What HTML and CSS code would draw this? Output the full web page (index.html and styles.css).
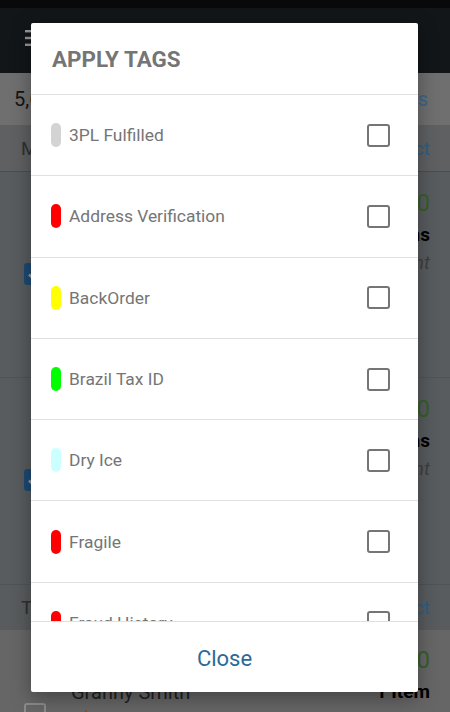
FILE: index.html
```html
<!DOCTYPE html>
<html lang="en">
<head>
<meta charset="utf-8">
<title>Apply Tags</title>
<link rel="stylesheet" href="styles.css">
</head>
<body>
<div class="app">
  <div class="status"></div>
  <header class="appbar">
    <svg class="menu" viewBox="0 0 18 16" width="18" height="16"><rect x="0" y="0" width="18" height="2.4"/><rect x="0" y="6.8" width="18" height="2.4"/><rect x="0" y="13.6" width="18" height="2.4"/></svg>
  </header>
  <div class="summary"><span class="count">5,682 Orders</span><span class="link">Actions</span></div>
  <div class="group-head"><span>March 2</span><span class="link">Select</span></div>
  <div class="order selected">
    <span class="cb checked"><svg viewBox="0 0 22 22" width="22" height="22"><path d="M5 11.5l4 4 8-9" fill="none" stroke="#fff" stroke-width="2.5"/></svg></span>
    <div class="main"></div>
    <div class="side"><span class="price">$42.00</span><span class="items">3 Items</span><span class="note">Urgent</span></div>
  </div>
  <div class="order selected">
    <span class="cb checked"><svg viewBox="0 0 22 22" width="22" height="22"><path d="M5 11.5l4 4 8-9" fill="none" stroke="#fff" stroke-width="2.5"/></svg></span>
    <div class="main"></div>
    <div class="side"><span class="price">$18.50</span><span class="items">2 Items</span><span class="note">Urgent</span></div>
  </div>
  <div class="group-head"><span>Today</span><span class="link">Select</span></div>
  <div class="order plain">
    <span class="cb"></span>
    <div class="main"><span class="name">Granny Smith</span><span class="flag"></span></div>
    <div class="side"><span class="price">$10.00</span><span class="items">1 Item</span></div>
  </div>
</div>

<div class="scrim"></div>

<div class="dialog">
  <div class="dialog-head"><h2>APPLY TAGS</h2></div>
  <ul class="tags">
    <li class="tag"><span class="pill" style="--c:#d3d3d3"></span><span class="tag-name">3PL Fulfilled</span><span class="box"></span></li>
    <li class="tag"><span class="pill" style="--c:#ff0000"></span><span class="tag-name">Address Verification</span><span class="box"></span></li>
    <li class="tag"><span class="pill" style="--c:#ffff00"></span><span class="tag-name">BackOrder</span><span class="box"></span></li>
    <li class="tag"><span class="pill" style="--c:#00ff00"></span><span class="tag-name">Brazil Tax ID</span><span class="box"></span></li>
    <li class="tag"><span class="pill" style="--c:#ccffff"></span><span class="tag-name">Dry Ice</span><span class="box"></span></li>
    <li class="tag"><span class="pill" style="--c:#ff0000"></span><span class="tag-name">Fragile</span><span class="box"></span></li>
    <li class="tag"><span class="pill" style="--c:#ff0000"></span><span class="tag-name">Fraud History</span><span class="box"></span></li>
  </ul>
  <div class="dialog-foot"><button class="close" type="button">Close</button></div>
</div>
</body>
</html>
```

FILE: styles.css
```css
* { box-sizing: border-box; margin: 0; padding: 0; }
html, body { width: 450px; height: 712px; overflow: hidden; }
body {
  font-family: Roboto, "Noto Sans", "Liberation Sans", sans-serif;
  background: #aaaaaa;
  position: relative;
}

/* ---------- underlying app ---------- */
.app { display: flex; flex-direction: column; height: 712px; }
.status { flex: none; height: 8px; background: #0e0f12; }
.appbar {
  flex: none; height: 65px; background: #1e252a;
  display: flex; align-items: flex-start;
  padding: 22px 0 0 25px;
}
.menu { fill: #ffffff; flex: none; }

.summary {
  flex: none; height: 52px; background: #b9b9b9;
  display: flex; align-items: center; justify-content: space-between;
  padding: 0 22px 0 14px;
  font-size: 20px; color: #232323;
}
.link { color: #4a9de0; }
.summary .link { color: #5fa9ec; }

.group-head {
  flex: none; height: 47px; background: #9da0a3;
  border-bottom: 1px solid #7d8083;
  display: flex; align-items: center; justify-content: space-between;
  padding: 0 20px 0 21px;
  font-size: 19px; color: #505050;
}
.order {
  flex: none; height: 206px;
  display: grid; grid-template-columns: 22px 1fr auto; column-gap: 25px;
  padding: 0 20px 0 24px;
  background: #93999e;
  border-bottom: 1px solid #868c91;
}
.order + .order { height: 207px; }
.order + .group-head { height: 45px; background: #95999d; border-bottom: none; }
.order.plain { background: #aaaaaa; border-bottom: none; height: auto; flex: 1; }

.cb {
  width: 22px; height: 22px; margin-top: 91px;
  border-radius: 3px; border: 2px solid #e8e8e8;
}
.cb.checked { background: #327bbf; border: none; }
.cb svg { display: block; }
.plain .cb { margin-top: 73px; }

.main { display: flex; flex-direction: column; padding-top: 46px; }
.name { font-size: 20px; line-height: 32px; color: #383838; }
.flag {
  width: 0; height: 0; margin: 2px 0 0 10px;
  border-left: 5px solid transparent; border-right: 5px solid transparent;
  border-bottom: 8px solid #e07a1f;
}

.side { display: flex; flex-direction: column; align-items: flex-end; padding-top: 15px; }
.price { font-size: 24px; line-height: 32px; color: #5a9e45; }
.items { font-size: 19px; line-height: 32px; font-weight: 700; color: #000; }
.note { font-size: 19px; line-height: 24px; font-style: italic; color: #6a6a6a; }
.plain .side { padding-top: 14px; }

/* ---------- dialog ---------- */
.scrim { position: absolute; inset: 0; background: rgba(0, 0, 0, 0.4); }

.dialog {
  position: absolute; left: 31px; top: 23px; width: 387px; height: 669px;
  background: #ffffff; border-radius: 2px;
  box-shadow: 0 6px 20px rgba(0, 0, 0, 0.35);
  display: flex; flex-direction: column; overflow: hidden;
}
.dialog-head {
  flex: none; height: 72px; border-bottom: 1px solid #e0e0e0;
  display: flex; align-items: center; padding: 0 0 0 21px;
}
.dialog-head h2 { font-size: 22.4px; font-weight: 700; color: #757575; margin-top: 1px; }

.tags { list-style: none; flex: 1; overflow: hidden; }
.tag {
  height: 81.3px; border-bottom: 1px solid #e0e0e0;
  display: flex; align-items: center;
  padding: 0 28px 0 20px;
}
.pill { flex: none; width: 10px; height: 24px; border-radius: 5px; background: var(--c); margin-right: 8px; }
.tag-name { flex: 1; font-size: 17.4px; color: #757575; }
.box { flex: none; width: 23px; height: 23px; border: 2px solid #757575; border-radius: 3px; }

.dialog-foot {
  flex: none; height: 71px; border-top: 1px solid #e0e0e0;
  display: flex; align-items: center; justify-content: center;
}
.close {
  border: none; background: none; font-family: inherit;
  font-size: 22px; color: #2a6a9a; padding: 4px 16px; margin-top: 2px;
}
```
